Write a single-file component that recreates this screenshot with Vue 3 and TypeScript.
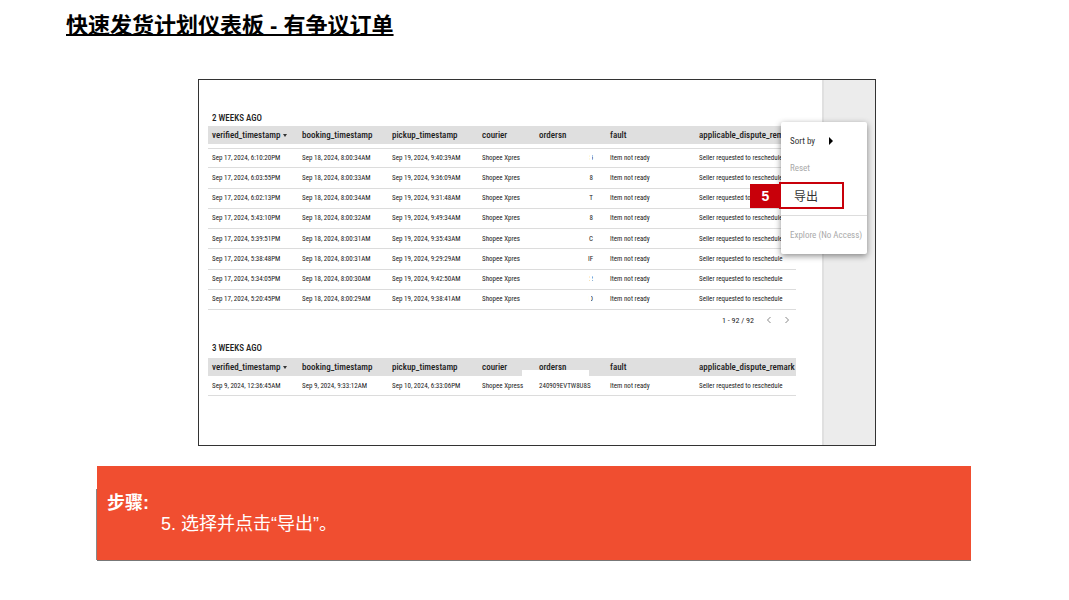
<script setup lang="ts">
interface Row {
  verified: string
  booking: string
  pickup: string
  courier: string
  order: string
}

interface Section {
  title: string
  rows: Row[]
  masked: boolean
}

const columns: string[] = [
  'verified_timestamp',
  'booking_timestamp',
  'pickup_timestamp',
  'courier',
  'ordersn',
  'fault',
  'applicable_dispute_remark',
]

const recent: string[][] = [
  ['6:10:20PM', '8:00:34AM', '9:40:39AM', '5'],
  ['6:03:55PM', '8:00:33AM', '9:36:09AM', '8'],
  ['6:02:13PM', '8:00:34AM', '9:31:48AM', 'T'],
  ['5:43:10PM', '8:00:32AM', '9:49:34AM', '8'],
  ['5:39:51PM', '8:00:31AM', '9:35:43AM', 'C'],
  ['5:38:48PM', '8:00:31AM', '9:29:29AM', 'IF'],
  ['5:34:05PM', '8:00:30AM', '9:42:50AM', '2'],
  ['5:20:45PM', '8:00:29AM', '9:38:41AM', 'D'],
]

const halfHidden: string[] = ['5', '2', 'D']

const sections: Section[] = [
  {
    title: '2 WEEKS AGO',
    masked: true,
    rows: recent.map(([v, b, p, order]) => ({
      verified: `Sep 17, 2024, ${v}`,
      booking: `Sep 18, 2024, ${b}`,
      pickup: `Sep 19, 2024, ${p}`,
      courier: 'Shopee Xpres',
      order,
    })),
  },
  {
    title: '3 WEEKS AGO',
    masked: false,
    rows: [
      {
        verified: 'Sep 9, 2024, 12:36:45AM',
        booking: 'Sep 9, 2024, 9:33:12AM',
        pickup: 'Sep 10, 2024, 6:33:06PM',
        courier: 'Shopee Xpress',
        order: '240909EVTW8U8S',
      },
    ],
  },
]
</script>

<template>
  <main class="slide">
    <h1>快速发货计划仪表板 - 有争议订单</h1>

    <section class="frame">
      <div class="report">
        <template v-for="s in sections" :key="s.title">
          <h2>{{ s.title }}</h2>
          <table :class="s.masked ? 'masked' : 'plain'">
            <colgroup>
              <col class="c-time" /><col class="c-time" /><col class="c-time" />
              <col class="c-courier" /><col class="c-order" /><col class="c-fault" /><col />
            </colgroup>
            <thead>
              <tr>
                <th v-for="(c, i) in columns" :key="c" scope="col">
                  {{ c }}
                  <svg v-if="i === 0" class="sort" viewBox="0 0 4 3"><path d="M0 0h4L2 3z" /></svg>
                  <span v-if="c === 'ordersn' && !s.masked" class="patch"></span>
                </th>
              </tr>
            </thead>
            <tbody>
              <tr v-for="r in s.rows" :key="r.verified">
                <td>{{ r.verified }}</td>
                <td>{{ r.booking }}</td>
                <td>{{ r.pickup }}</td>
                <td>{{ r.courier }}</td>
                <td class="order"><span :class="{ cut: halfHidden.includes(r.order) }">{{ r.order }}</span></td>
                <td>Item not ready</td>
                <td>Seller requested to reschedule</td>
              </tr>
            </tbody>
          </table>
          <nav v-if="s.masked" class="pager">
            <span>1 - 92 / 92</span>
            <button type="button" aria-label="Previous page">
              <svg viewBox="0 0 5 8"><path d="M4 1L1 4l3 3" /></svg>
            </button>
            <button type="button" aria-label="Next page">
              <svg viewBox="0 0 5 8"><path d="M1 1l3 3-3 3" /></svg>
            </button>
          </nav>
        </template>
      </div>
      <aside class="gutter"></aside>

      <div class="menu">
        <button type="button" class="item">
          Sort by
          <svg class="more" viewBox="0 0 4 8"><path d="M0 0l4 4-4 4z" /></svg>
        </button>
        <button type="button" class="item" disabled>Reset</button>
        <button type="button" class="item export">
          <span class="badge">5</span>导出
        </button>
        <hr />
        <button type="button" class="item" disabled>Explore (No Access)</button>
      </div>
    </section>

    <section class="steps">
      <h3>步骤:</h3>
      <p>5. 选择并点击“导出”。</p>
    </section>
  </main>
</template>

<style>
body {
  margin: 0;
  background: #fff;
}
</style>

<style scoped>
.slide {
  font-family: "Liberation Sans", "Noto Sans CJK SC", sans-serif;
  color: #000;
}

h1 {
  margin: 0;
  padding: 10px 66px 0;
  font-size: 22px;
  line-height: 32px;
  font-weight: 700;
  text-decoration: underline;
  text-decoration-thickness: 2px;
  text-decoration-skip-ink: none;
  text-underline-offset: 1px;
}

.frame {
  position: relative;
  display: flex;
  box-sizing: border-box;
  margin: 37px 193px 0 198px;
  border: 1px solid #333;
  font-family: "Roboto Condensed", "Liberation Sans Narrow", Roboto, sans-serif;
  font-size: 7px;
  color: #222;
}

.report {
  flex: 1;
  padding: 30px 26px 49px 9px;
}

.gutter {
  box-sizing: border-box;
  width: 53px;
  background: #ececec;
  border-left: 2px solid #e0e0e0;
}

h2 {
  margin: 0;
  padding-left: 4px;
  font-size: 9px;
  line-height: 16px;
  font-weight: 500;
  color: #222;
}

table {
  width: 100%;
  table-layout: fixed;
  border-collapse: separate;
  border-spacing: 0;
}

.c-time {
  width: 90px;
}

.c-courier {
  width: 57px;
}

.c-order {
  width: 71px;
}

.c-fault {
  width: 89px;
}

th,
td {
  box-sizing: border-box;
  padding: 0 0 0 4px;
  text-align: left;
  white-space: nowrap;
}

th {
  position: relative;
  height: 18px;
  font-size: 9px;
  line-height: 16px;
  font-weight: 500;
  background: #dfdfdf;
}

td {
  height: 20px;
  line-height: 18px;
  border-bottom: 1px solid #dcdcdc;
}

.masked {
  height: 184px;
}

.masked thead::after {
  content: "";
  display: table-row;
  height: 4px;
}

.masked tbody tr:first-child td {
  border-top: 1px solid #dcdcdc;
}

.masked .order {
  padding-right: 13px;
  text-align: right;
}

.plain {
  margin-top: 2px;
}

.cut {
  position: relative;
}

.cut::before {
  content: "";
  position: absolute;
  top: 0;
  bottom: 0;
  left: 0;
  width: 2px;
  background: #fff;
}

.sort {
  width: 4px;
  height: 3px;
  margin-left: 1px;
  vertical-align: middle;
  fill: #333;
}

.patch {
  position: absolute;
  left: -13px;
  bottom: 0;
  width: 67px;
  height: 6px;
  background: #fff;
}

.pager {
  display: flex;
  align-items: center;
  justify-content: flex-end;
  height: 20px;
  gap: 12px;
  margin: 0 6px 10px 0;
  font-size: 8px;
}

.pager button {
  display: flex;
  padding: 0;
  border: 0;
  background: none;
}

.pager svg {
  width: 6px;
  height: 8px;
  fill: none;
  stroke: #888;
}

.menu {
  position: absolute;
  top: 42px;
  right: 8px;
  box-sizing: border-box;
  width: 86px;
  padding: 6px 0 5px;
  background: #fff;
  border-radius: 2px;
  box-shadow: 0 2px 6px rgba(0, 0, 0, 0.45);
}

.item {
  display: flex;
  align-items: center;
  box-sizing: border-box;
  width: 100%;
  height: 27px;
  padding: 0 0 2px 9px;
  border: 0;
  background: none;
  font-family: inherit;
  font-size: 9px;
  white-space: nowrap;
  color: #333;
}

.item:disabled {
  color: #aaa;
}

.more {
  width: 4px;
  height: 8px;
  margin-left: 14px;
  fill: #000;
}

.export {
  position: relative;
  width: 65px;
  margin-left: -2px;
  padding: 0 0 0 13px;
  border: 2px solid #c8000a;
  font-family: "Noto Sans CJK SC", sans-serif;
  font-size: 12px;
}

.badge {
  position: absolute;
  top: 0;
  right: 100%;
  width: 31px;
  font-family: "Liberation Sans", sans-serif;
  font-size: 14px;
  line-height: 24px;
  font-weight: 700;
  text-align: center;
  color: #fff;
  background: #c8000a;
}

hr {
  height: 1px;
  margin: 6px 0;
  border: 0;
  background: #ddd;
}

.steps {
  position: relative;
  margin: 20px 98px 0 97px;
  padding: 27px 10px 25px;
  background: #f04e30;
  border-bottom: 1px solid #777;
  color: #fff;
}

.steps::before {
  content: "";
  position: absolute;
  top: 23px;
  bottom: 0;
  left: -1px;
  width: 1px;
  background: #888;
}

h3,
p {
  margin: 0;
  font-size: 18px;
  line-height: 21px;
}

p {
  padding-left: 54px;
}
</style>
